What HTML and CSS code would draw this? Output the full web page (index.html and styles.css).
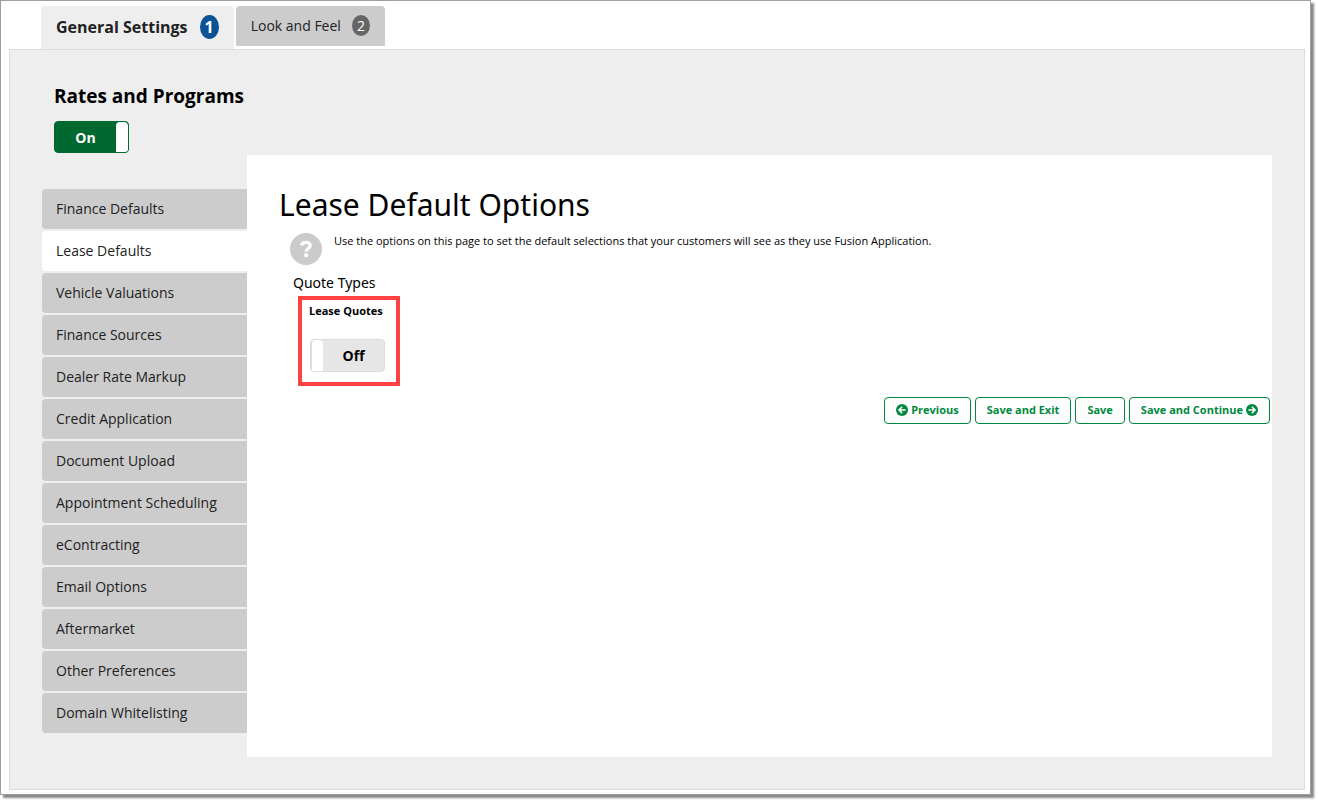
FILE: index.html
```html
<!DOCTYPE html>
<html lang="en">
<head>
  <meta charset="UTF-8">
  <meta name="viewport" content="width=device-width, initial-scale=1.0">
  <title>General Settings - Lease Defaults</title>
  <link rel="stylesheet" href="styles.css">
</head>
<body>
  <div class="page">
    <nav class="tabs">
      <a href="#general" class="tab active">General Settings <span class="badge">1</span></a>
      <a href="#look" class="tab">Look and Feel <span class="badge">2</span></a>
    </nav>

    <div class="panel">
      <div class="program">
        <h2 id="programTitle">Rates and Programs</h2>
        <label class="toggle">
          <input type="checkbox" aria-labelledby="programTitle" checked>
          <span class="toggle-on">On</span>
          <span class="toggle-handle"></span>
          <span class="toggle-off">Off</span>
        </label>
      </div>

      <div class="columns">
        <nav class="side-menu">
          <a href="#finance-defaults">Finance Defaults</a>
          <a href="#lease-defaults" class="active">Lease Defaults</a>
          <a href="#valuations">Vehicle Valuations</a>
          <a href="#sources">Finance Sources</a>
          <a href="#markup">Dealer Rate Markup</a>
          <a href="#credit">Credit Application</a>
          <a href="#documents">Document Upload</a>
          <a href="#appointments">Appointment Scheduling</a>
          <a href="#econtracting">eContracting</a>
          <a href="#email">Email Options</a>
          <a href="#aftermarket">Aftermarket</a>
          <a href="#preferences">Other Preferences</a>
          <a href="#domains">Domain Whitelisting</a>
        </nav>

        <main class="content">
          <h1>Lease Default Options</h1>
          <div class="help">
            <svg class="help-icon" viewBox="0 0 32 32" aria-hidden="true">
              <circle cx="16" cy="16" r="16" fill="#cbcbcb"/>
              <path d="M11.6 12.4 C12.4 8.6 20.2 8.2 20.2 12.6 C20.2 15.6 16.2 15.2 16.2 18.6" fill="none" stroke="#fff" stroke-width="3.4"/>
              <circle cx="16.2" cy="22.2" r="2.1" fill="#fff"/>
            </svg>
            <p>Use the options on this page to set the default selections that your customers will see as they use Fusion Application.</p>
          </div>

          <h3>Quote Types</h3>
          <div class="quote-box">
            <label for="leaseQuotes">Lease Quotes</label>
            <label class="toggle">
              <input type="checkbox" id="leaseQuotes">
              <span class="toggle-on">On</span>
              <span class="toggle-handle"></span>
              <span class="toggle-off">Off</span>
            </label>
          </div>

          <div class="actions">
            <button type="button">
              <svg viewBox="0 0 12 12" aria-hidden="true">
                <circle cx="6" cy="6" r="6" fill="#00883e"/>
                <path d="M9.6 6 H3.2 M6.2 2.8 L3 6 L6.2 9.2" fill="none" stroke="#fff" stroke-width="1.6"/>
              </svg>
              Previous
            </button>
            <button type="button">Save and Exit</button>
            <button type="button">Save</button>
            <button type="button">
              Save and Continue
              <svg viewBox="0 0 12 12" aria-hidden="true">
                <circle cx="6" cy="6" r="6" fill="#00883e"/>
                <path d="M2.4 6 H8.8 M5.8 2.8 L9 6 L5.8 9.2" fill="none" stroke="#fff" stroke-width="1.6"/>
              </svg>
            </button>
          </div>
        </main>
      </div>
    </div>
  </div>
</body>
</html>
```

FILE: styles.css
```css
* {
  box-sizing: border-box;
}
body {
  margin: 0;
  background: #fff;
  color: #000;
  font-family: "Open Sans", Arial, sans-serif;
  font-size: 14px;
}
h1, h2, h3, p {
  margin: 0;
}
a {
  color: #222;
  text-decoration: none;
}
.page {
  margin: 0 7px 6px 0;
  padding: 5px 5px 4px 8px;
  border: 1px solid #a0a0a0;
  box-shadow: 3px 3px 2px #888;
}

/* top tabs */
.tabs {
  display: flex;
  align-items: flex-start;
  gap: 2px;
  padding-left: 32px;
}
.tab {
  display: flex;
  align-items: center;
  gap: 11px;
  height: 40px;
  padding: 0 15px 2px;
  background: #ccc;
  border-radius: 4px 4px 0 0;
}
.tab.active {
  gap: 12px;
  height: 43px;
  background: #eee;
  font-size: 16px;
  font-weight: 700;
}
.badge {
  padding: 1px 5px;
  border-radius: 50%;
  background: #666;
  color: #fff;
  line-height: 19px;
}
.tab.active .badge {
  background: #0b5394;
  line-height: 22px;
}

.panel {
  padding: 32px;
  border: 1px solid #ddd;
  background: #eee;
}
.program {
  padding: 0 0 2px 12px;
}
.program h2 {
  margin-bottom: 11px;
  font-size: 19px;
  font-weight: 700;
  line-height: 28px;
}

/* on/off switch */
.toggle {
  display: flex;
  width: 75px;
  height: 32px;
  border: 1px solid #ddd;
  border-radius: 4px;
  background: #e6e6e6;
  font-weight: 700;
  line-height: 32px;
  text-align: center;
  overflow: hidden;
  cursor: pointer;
}
.toggle input {
  position: absolute;
  opacity: 0;
}
.toggle-on,
.toggle-off {
  flex: 1;
}
.toggle-handle {
  width: 12px;
  border-radius: 4px 4px 0 0;
  background: #fff;
}
.toggle-on {
  display: none;
}
.toggle:has(:checked) {
  border-color: #00692f;
  background: #00692f;
  color: #fff;
}
.toggle :checked ~ .toggle-on {
  display: block;
}
.toggle :checked ~ .toggle-off {
  display: none;
}

.columns {
  display: flex;
}
.side-menu {
  display: flex;
  flex-direction: column;
  gap: 2px;
  width: 205px;
  padding: 34px 0 24px;
}
.side-menu a {
  padding: 0 14px;
  border-radius: 4px 0 0 4px;
  background: #ccc;
  line-height: 40px;
}
.side-menu a.active {
  background: #fff;
}

.content {
  flex: 1;
  padding: 30px 2px 30px 32px;
  background: #fff;
}
.content h1,
.content h3 {
  font-family: "Noto Sans", "Open Sans", Arial, sans-serif;
  font-weight: 400;
}
.content h1 {
  font-size: 30px;
  line-height: 40px;
}
.help {
  display: flex;
  gap: 12px;
  padding: 8px 11px;
  font-size: 11px;
  line-height: 16px;
}
.help-icon {
  width: 32px;
  height: 32px;
}
.content h3 {
  margin-left: 14px;
  font-size: 14px;
  line-height: 20px;
}
.quote-box {
  width: 102px;
  height: 90px;
  margin: 3px 0 11px 19px;
  padding: 3px 7px;
  border: 4px solid #ff4343;
  font-size: 11px;
  font-weight: 700;
  line-height: 16px;
}
.quote-box .toggle {
  height: 33px;
  margin: 20px 0 0 1px;
  font-size: 14px;
  line-height: 32px;
}
.quote-box .toggle-handle {
  border-left: 1px solid #ddd;
}
.actions {
  display: flex;
  justify-content: flex-end;
  gap: 4px;
}
.actions button {
  display: flex;
  align-items: center;
  gap: 3px;
  height: 27px;
  padding: 0 11px 2px;
  border: 1px solid #00883e;
  border-radius: 4px;
  background: #fff;
  color: #00883e;
  font: 700 11px "Open Sans", Arial, sans-serif;
  cursor: pointer;
}
.actions svg {
  width: 12px;
  height: 12px;
}
```
